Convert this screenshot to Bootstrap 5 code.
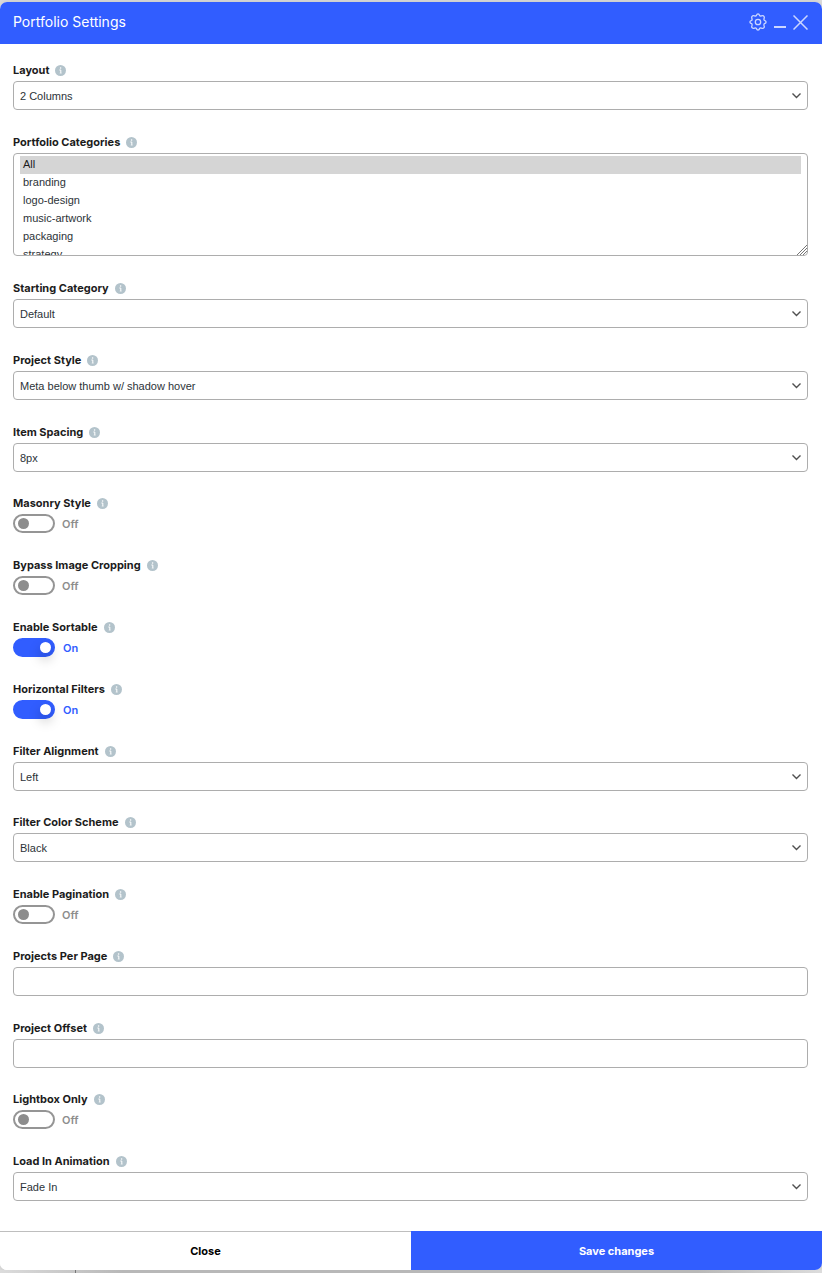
<!DOCTYPE html>
<html lang="en">
<head>
<meta charset="utf-8">
<meta name="viewport" content="width=device-width, initial-scale=1">
<title>Portfolio Settings</title>
<link href="https://cdn.jsdelivr.net/npm/bootstrap@5.3.0/dist/css/bootstrap.min.css" rel="stylesheet">
<style>
:root { --brand: #315dff; --line: #adadad; --off: #8d8d8d; }
body { font-family: Inter, sans-serif; font-size: 11px; line-height: 16px; color: #1c1c1c; background: #dfdfdf; padding-top: 2px; min-height: 100vh; }
.settings-panel { background: #fff; border-radius: 7px; overflow: hidden; box-shadow: 0 0 10px rgba(0,0,0,.15); }
.panel-head { background: var(--brand); color: #fff; height: 42px; padding: 0 14px 2px 13px; }
.panel-head h1 { font-size: 14px; line-height: 20px; font-weight: 400; }
.tool { border: 0; background: none; padding: 0; color: #fff; opacity: .75; display: flex; }
.tools { gap: 7px; }
.panel-body { padding: 18px 14px 30px 13px; }
.setting { margin-bottom: 24px; }
.group .setting:last-child { margin-bottom: 23px; }
.group:last-child .setting:last-child { margin-bottom: 0; }
.setting-head { gap: 6px; margin-bottom: 3px; height: 16px; }
.setting-head label { font-weight: 700; }
.info-dot { width: 11px; height: 11px; display: block; }
.form-select, .form-control { font-family: "Liberation Sans", sans-serif; font-size: 11px; line-height: 16px; height: 29px; padding: 0 24px 0 7px; border: 1px solid var(--line); border-radius: 4px; color: #2c3338; background-color: #fff; }
.form-select:not([multiple]) { padding-left: 6px; background-position: right 5px center; background-size: 11px 11px; background-image: url("data:image/svg+xml,%3csvg xmlns='http://www.w3.org/2000/svg' viewBox='0 0 11 11'%3e%3cpath fill='none' stroke='%23505050' stroke-width='1.4' d='M1.5 3.5 5.5 7.5 9.5 3.5'/%3e%3c/svg%3e"); }
.form-select[multiple] { display: block; height: 103px; padding: 2px 6px 0; overflow: hidden; scrollbar-width: none; }
.form-select[multiple]::-webkit-scrollbar { display: none; }
.form-select option { padding: 2px 3px 0; min-height: 18px; line-height: 16px; }
.form-select[multiple] option:checked { color: #1c1c1c; background: #d5d5d5 linear-gradient(#d5d5d5, #d5d5d5); }
.grip { right: 1px; bottom: 1px; pointer-events: none; }
.switch-row { height: 19px; gap: 7px; font-weight: 600; font-size: 11px; }
.switch-row .form-check-input { width: 42px; height: 19px; margin: 0; float: none; border: 2px solid #959595; border-radius: 10px; background: #fff; position: relative; flex: none; }
.switch-row .form-check-input::before { content: ""; position: absolute; width: 11px; height: 11px; left: 3px; top: 2px; border-radius: 50%; background: var(--off); }
.switch-row .form-check-input:checked { background: var(--brand); border-color: var(--brand); }
.switch-row .form-check-input:checked::before { left: auto; right: 2px; background: #fff; box-shadow: 0 6px 12px rgba(0,0,0,.25); }
.switch-row output { padding: 0; color: var(--off); }
.switch-row .form-check-input:checked + output { color: var(--brand); padding-left: 1px; }
.panel-foot button { flex: 1 1 0; height: 39px; border: 0; font-size: 11px; font-weight: 700; background: #fff; color: #000; border-top: 1px solid #bebebe; border-radius: 0; padding: 0; }
.panel-foot .save { background: var(--brand); border-color: var(--brand); color: #fff; }
.page-edge { height: 3px; background: linear-gradient(90deg, #dcdcdc, #b8b8b8 15%, #b8b8b8 85%, #dcdcdc); padding-left: 75px; }
.page-edge i { display: block; width: 1px; height: 3px; background: #777; }
</style>
</head>
<body>
<svg class="d-none"><symbol id="info" viewBox="0 0 11 11"><circle cx="5.5" cy="5.5" r="5.5" fill="#b3c3cb"/><path d="M4.4 5H5.8V8.3" fill="none" stroke="#fff" stroke-width="1"/><path d="M4.6 8.1H6.8" stroke="#fff" stroke-opacity=".6" stroke-width=".7"/><circle cx="5.6" cy="3" r=".8" fill="#fff"/></symbol></svg>
<form class="settings-panel" onsubmit="return false">
  <header class="panel-head d-flex align-items-center justify-content-between">
    <h1 class="m-0">Portfolio Settings</h1>
    <div class="tools d-flex align-items-center">
      <button type="button" class="tool" aria-label="Options"><svg width="18" height="18" viewBox="0 0 18 18" fill="none" stroke="currentColor" stroke-width="1.3" stroke-linejoin="round"><path d="M9 .9Q10.2 1 10.6 2.6 11.2 3.3 12.4 2.8 14.2 2.2 14.8 3.2 15.7 4.1 15 5.7 14.7 6.9 15.5 7.4 17.1 7.9 17.1 9 17.1 10.2 15.5 10.6 14.7 11.2 15 12.4 15.7 14 14.8 14.8 14.1 15.7 12.4 15.1 11.2 14.7 10.6 15.5 10.2 17.1 9 17.1 7.9 17.1 7.4 15.5 6.8 14.7 5.6 15.1 4 15.7 3.2 14.8 2.3 14 3 12.4 3.3 11.2 2.6 10.6.9 10.2.9 9 .9 7.9 2.6 7.4 3.3 6.9 3 5.7 2.3 4.1 3.2 3.2 3.9 2.2 5.6 2.8 6.8 3.3 7.4 2.6 7.9 1 9 .9Z"/><circle cx="9" cy="9" r="2.7"/></svg></button>
      <button type="button" class="tool" aria-label="Minimize"><svg width="12" height="18" viewBox="0 0 12 18"><path d="M0 14H12" stroke="currentColor" stroke-width="2"/></svg></button>
      <button type="button" class="tool" aria-label="Close dialog"><svg width="15" height="15" viewBox="0 0 15 15"><path d="M.5.5 14.5 14.5M14.5.5.5 14.5" stroke="currentColor" stroke-width="1.5"/></svg></button>
    </div>
  </header>
  <div class="panel-body">
    <section class="group">
      <div class="setting"><div class="setting-head d-flex align-items-center"><label for="layout">Layout</label><svg class="info-dot"><use href="#info"/></svg></div><select class="form-select" id="layout"><option>2 Columns</option></select></div>
      <div class="setting"><div class="setting-head d-flex align-items-center"><label for="cats">Portfolio Categories</label><svg class="info-dot"><use href="#info"/></svg></div>
        <div class="position-relative"><select class="form-select" id="cats" multiple><option selected>All</option><option>branding</option><option>logo-design</option><option>music-artwork</option><option>packaging</option><option>strategy</option></select>
        <svg class="grip position-absolute" width="10" height="10" viewBox="0 0 10 10"><path d="M0 10 10 0M3 10 10 3M6 10 10 6" stroke="#777" stroke-width="1"/></svg></div></div>
      <div class="setting"><div class="setting-head d-flex align-items-center"><label for="start">Starting Category</label><svg class="info-dot"><use href="#info"/></svg></div><select class="form-select" id="start"><option>Default</option></select></div>
      <div class="setting"><div class="setting-head d-flex align-items-center"><label for="pstyle">Project Style</label><svg class="info-dot"><use href="#info"/></svg></div><select class="form-select" id="pstyle"><option>Meta below thumb w/ shadow hover</option></select></div>
      <div class="setting"><div class="setting-head d-flex align-items-center"><label for="spacing">Item Spacing</label><svg class="info-dot"><use href="#info"/></svg></div><select class="form-select" id="spacing"><option>8px</option></select></div>
    </section>
    <section class="group">
      <div class="setting"><div class="setting-head d-flex align-items-center"><label for="masonry">Masonry Style</label><svg class="info-dot"><use href="#info"/></svg></div><div class="switch-row d-flex align-items-center"><input class="form-check-input" type="checkbox" role="switch" id="masonry"><output for="masonry">Off</output></div></div>
      <div class="setting"><div class="setting-head d-flex align-items-center"><label for="bypass">Bypass Image Cropping</label><svg class="info-dot"><use href="#info"/></svg></div><div class="switch-row d-flex align-items-center"><input class="form-check-input" type="checkbox" role="switch" id="bypass"><output for="bypass">Off</output></div></div>
      <div class="setting"><div class="setting-head d-flex align-items-center"><label for="sortable">Enable Sortable</label><svg class="info-dot"><use href="#info"/></svg></div><div class="switch-row d-flex align-items-center"><input class="form-check-input" type="checkbox" role="switch" id="sortable" checked><output for="sortable">On</output></div></div>
      <div class="setting"><div class="setting-head d-flex align-items-center"><label for="hfilters">Horizontal Filters</label><svg class="info-dot"><use href="#info"/></svg></div><div class="switch-row d-flex align-items-center"><input class="form-check-input" type="checkbox" role="switch" id="hfilters" checked><output for="hfilters">On</output></div></div>
      <div class="setting"><div class="setting-head d-flex align-items-center"><label for="falign">Filter Alignment</label><svg class="info-dot"><use href="#info"/></svg></div><select class="form-select" id="falign"><option>Left</option></select></div>
    </section>
    <section class="group">
      <div class="setting"><div class="setting-head d-flex align-items-center"><label for="fcolor">Filter Color Scheme</label><svg class="info-dot"><use href="#info"/></svg></div><select class="form-select" id="fcolor"><option>Black</option></select></div>
      <div class="setting"><div class="setting-head d-flex align-items-center"><label for="pagination">Enable Pagination</label><svg class="info-dot"><use href="#info"/></svg></div><div class="switch-row d-flex align-items-center"><input class="form-check-input" type="checkbox" role="switch" id="pagination"><output for="pagination">Off</output></div></div>
      <div class="setting"><div class="setting-head d-flex align-items-center"><label for="perpage">Projects Per Page</label><svg class="info-dot"><use href="#info"/></svg></div><input type="text" class="form-control" id="perpage"></div>
      <div class="setting"><div class="setting-head d-flex align-items-center"><label for="offset">Project Offset</label><svg class="info-dot"><use href="#info"/></svg></div><input type="text" class="form-control" id="offset"></div>
    </section>
    <section class="group">
      <div class="setting"><div class="setting-head d-flex align-items-center"><label for="lightbox">Lightbox Only</label><svg class="info-dot"><use href="#info"/></svg></div><div class="switch-row d-flex align-items-center"><input class="form-check-input" type="checkbox" role="switch" id="lightbox"><output for="lightbox">Off</output></div></div>
      <div class="setting"><div class="setting-head d-flex align-items-center"><label for="anim">Load In Animation</label><svg class="info-dot"><use href="#info"/></svg></div><select class="form-select" id="anim"><option>Fade In</option></select></div>
    </section>
  </div>
  <footer class="panel-foot d-flex"><button type="button">Close</button><button type="submit" class="save">Save changes</button></footer>
</form>
<div class="page-edge"><i></i></div>
<script src="https://cdn.jsdelivr.net/npm/bootstrap@5.3.0/dist/js/bootstrap.bundle.min.js"></script>
<script>
document.querySelectorAll('.switch-row input').forEach(function (box) {
  box.addEventListener('change', function () { box.nextElementSibling.value = box.checked ? 'On' : 'Off'; });
});
</script>
</body>
</html>
